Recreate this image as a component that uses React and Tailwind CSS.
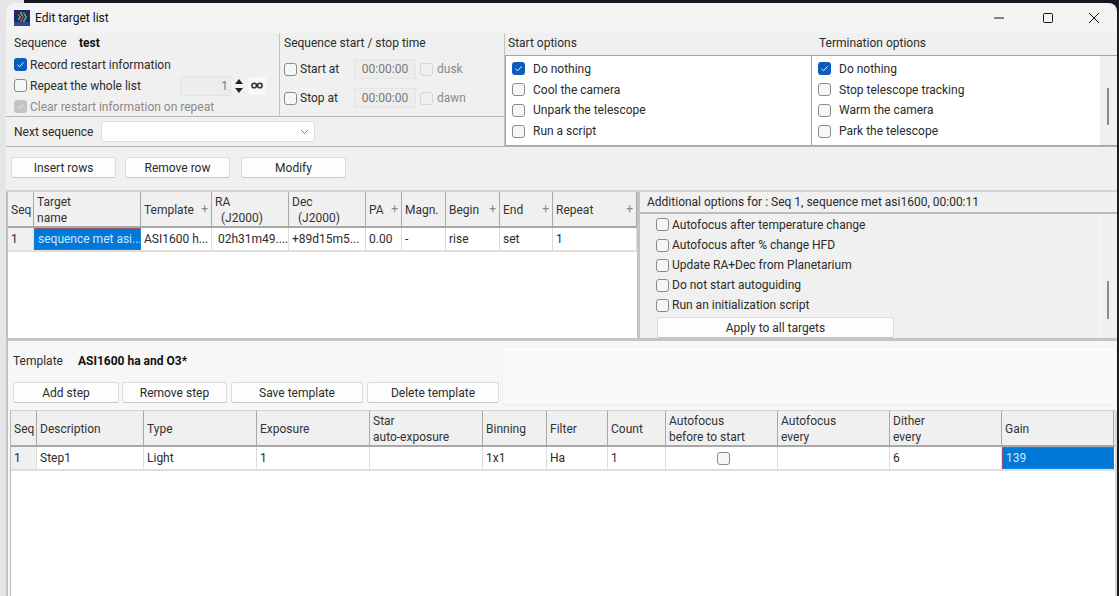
import React from 'react'

function Check({ checked, disabled, className = '' }) {
  if (checked) {
    return (
      <span className={`flex h-[13px] w-[13px] shrink-0 items-center justify-center rounded-[3px] ${disabled ? 'bg-[#c4c4c4]' : 'bg-[#0a5dbb]'} ${className}`}>
        <svg width="9" height="9" viewBox="0 0 9 9" fill="none" stroke="#e8f1fb" strokeWidth="1">
          <path d="M1.5 4.8 3.6 6.8 7.5 2.4" />
        </svg>
      </span>
    )
  }
  return (
    <span className={`block h-[13px] w-[13px] shrink-0 rounded-[3px] border ${disabled ? 'border-[#d6d6d6] bg-[#efefef]' : 'border-[#8b8b8b] bg-[#f6f6f6]'} ${className}`} />
  )
}

function Button({ children, className = '' }) {
  return (
    <div className={`flex h-[21px] items-center justify-center rounded-[3px] border border-[#dcdcdc] border-b-[#c8c8c8] bg-[#fdfdfd] text-[#2b2b2b] ${className}`}>
      {children}
    </div>
  )
}

function CheckRow({ label, checked, gap = 'gap-[8px]', className = '' }) {
  return (
    <div className={`flex shrink-0 items-center ${gap} ${className}`}>
      <Check checked={checked} />
      <span>{label}</span>
    </div>
  )
}

function HeadCell({ children, plus, sub }) {
  return (
    <div className="relative flex flex-col justify-center border-r border-r-[#a8a8a8] pl-[3px] pt-[1px] leading-[16px] text-[#333]">
      <span>{children}</span>
      {sub && <span>{sub}</span>}
      {plus && <span className="absolute right-[3px] top-1/2 -translate-y-1/2 text-[#8a8a8a]">+</span>}
    </div>
  )
}

function Cell({ children, selected, className = '' }) {
  return (
    <div
      className={`flex items-center overflow-hidden whitespace-nowrap pl-[3px] ${
        selected ? 'border border-dotted border-[#a0607f] bg-[#0078d7] text-[#cfe6fb]' : 'border-r border-r-[#dcdcdc] text-[#2b2b2b]'
      } ${className}`}
    >
      {children}
    </div>
  )
}

const targetHead = [
  { t: 'Seq' },
  { t: 'Target', sub: 'name' },
  { t: 'Template', plus: true },
  { t: 'RA', sub: '\u00a0\u00a0(J2000)' },
  { t: 'Dec', sub: '\u00a0\u00a0(J2000)' },
  { t: 'PA', plus: true },
  { t: 'Magn.' },
  { t: 'Begin', plus: true },
  { t: 'End', plus: true },
  { t: 'Repeat', plus: true },
]

const stepHead = [
  { t: 'Seq' },
  { t: 'Description' },
  { t: 'Type' },
  { t: 'Exposure' },
  { t: 'Star', sub: 'auto-exposure' },
  { t: 'Binning' },
  { t: 'Filter' },
  { t: 'Count' },
  { t: 'Autofocus', sub: 'before to start' },
  { t: 'Autofocus', sub: 'every' },
  { t: 'Dither', sub: 'every' },
  { t: 'Gain' },
]

const targetCols = 'grid-cols-[26px_107px_71px_77px_77px_36px_44px_54px_53px_84px]'
const stepCols = 'grid-cols-[26px_107px_113px_113px_113px_64px_61px_58px_112px_112px_112px_112px]'

const iconCells = [
  [6, 2, '#35b060'], [9, 2, '#c8324a'], [4, 4, '#c8324a'], [7, 4, '#35b060'], [10, 4, '#35b060'],
  [5, 6, '#35b060'], [8, 6, '#c8324a'], [11, 6, '#35b060'], [4, 8, '#35b060'], [7, 8, '#c8324a'],
  [10, 8, '#35b060'], [6, 10, '#c8324a'], [9, 10, '#35b060'],
]

export default function App() {
  return (
    <div className="flex h-[596px] w-[1119px] overflow-hidden bg-[#f7f7f7] font-['Roboto',sans-serif] text-[12px] text-[#2b2b2b]">
      <div className="w-[6px] shrink-0 bg-[#e6e6e6]" />
      <div className="flex min-w-0 flex-1 flex-col">
        <div className="flex h-[3px] shrink-0 bg-[#15151f]">
          <div className="w-[18px] bg-[#e6e6e6]" />
        </div>
        <div className="h-[30px] shrink-0 bg-[linear-gradient(90deg,#e6e6e6_50%,#15151f_50%)]">
          <div className="flex h-full items-center rounded-t-lg bg-[#f3f3f3] pl-[8px]">
            <svg width="16" height="16" viewBox="0 0 16 16" className="shrink-0">
              <rect width="16" height="16" fill="#1b2c68" />
              <rect y="12" width="16" height="4" fill="#2c4c8e" />
              {iconCells.map(([x, y, c]) => (
                <rect key={`${x}-${y}`} x={x} y={y} width="2" height="2" fill={c} />
              ))}
            </svg>
            <span className="ml-[5px] text-[#111]">Edit target list</span>
            <div className="ml-auto flex h-full items-center">
              <svg width="12" height="12" viewBox="0 0 12 12" className="mr-[37px]"><path d="M1 6h10" stroke="#111" /></svg>
              <svg width="12" height="12" viewBox="0 0 12 12" className="mr-[34px]"><rect x="1.5" y="1.5" width="9" height="9" rx="1" fill="none" stroke="#111" /></svg>
              <svg width="12" height="12" viewBox="0 0 12 12" className="mr-[17px]"><path d="M1 1l10 10M11 1 1 11" stroke="#111" /></svg>
            </div>
          </div>
        </div>

        {/* top options */}
        <div className="flex h-[114px] shrink-0 border-b border-b-[#b4b4b4] bg-[#f0f0f0]">
          <div className="flex w-[499px] shrink-0 flex-col border-r border-r-[#c4c4c4]">
            <div className="flex h-[84px] shrink-0 border-b border-b-[#b8b8b8]">
              <div className="flex w-[274px] shrink-0 flex-col border-r border-r-[#c4c4c4] pl-[8px]">
                <div className="flex h-[19px] shrink-0 items-center">
                  <span className="w-[65px]">Sequence</span>
                  <span className="font-bold text-[#111]">test</span>
                </div>
                <CheckRow label="Record restart information" checked gap="gap-[3px]" className="mt-[2px] h-[21px]" />
                <div className="flex h-[21px] shrink-0 items-center">
                  <CheckRow label="Repeat the whole list" gap="gap-[3px]" className="w-[166px]" />
                  <div className="flex h-[20px] w-[51px] items-center justify-end border border-[#e4e4e4] bg-[#ededed] pr-[2px] text-[#777]">1</div>
                  <svg width="12" height="18" viewBox="0 0 12 18" className="ml-[2px]">
                    <path d="M6 2 10 7H2zM6 16 2 11h8z" fill="#222" />
                  </svg>
                  <div className="ml-[3px] flex h-[18px] w-[18px] items-center justify-center rounded-[2px] bg-[#f8f8f8]">
                    <svg width="12" height="7" viewBox="0 0 12 7" fill="none" stroke="#333" strokeWidth="1.6">
                      <circle cx="3.2" cy="3.5" r="2.3" />
                      <circle cx="8.8" cy="3.5" r="2.3" />
                    </svg>
                  </div>
                </div>
                <div className="flex h-[21px] shrink-0 items-center gap-[3px] text-[#8a8a8a]">
                  <Check checked disabled />
                  <span>Clear restart information on repeat</span>
                </div>
              </div>
              <div className="flex min-w-0 flex-1 flex-col pl-[4px]">
                <div className="flex h-[19px] items-center">Sequence start / stop time</div>
                <div className="mt-[7px] flex h-[20px] items-center">
                  <CheckRow label="Start at" gap="gap-[3px]" className="w-[70px]" />
                  <div className="flex h-[20px] w-[62px] items-center justify-center border border-[#e4e4e4] bg-[#ededed] text-[#777]">00:00:00</div>
                  <Check disabled className="ml-[4px]" />
                  <span className="ml-[4px] text-[#8a8a8a]">dusk</span>
                </div>
                <div className="mt-[9px] flex h-[20px] items-center">
                  <CheckRow label="Stop at" gap="gap-[3px]" className="w-[70px]" />
                  <div className="flex h-[20px] w-[62px] items-center justify-center border border-[#e4e4e4] bg-[#ededed] text-[#777]">00:00:00</div>
                  <Check disabled className="ml-[4px]" />
                  <span className="ml-[4px] text-[#8a8a8a]">dawn</span>
                </div>
              </div>
            </div>
            <div className="flex min-h-0 flex-1 items-center pl-[8px]">
              <span className="w-[87px]">Next sequence</span>
              <div className="flex h-[21px] w-[214px] items-center justify-end rounded-[3px] border border-[#dcdcdc] bg-white pr-[5px]">
                <svg width="9" height="6" viewBox="0 0 9 6" fill="none" stroke="#777"><path d="M1 1l3.5 3.5L8 1" /></svg>
              </div>
            </div>
          </div>
          <div className="flex w-[306px] shrink-0 flex-col">
            <div className="mb-[2px] flex h-[20px] items-center pl-[3px]">Start options</div>
            <div className="flex min-h-0 flex-1 flex-col justify-center border border-[#a4a4a4] border-r-0 bg-white pb-[1px] pl-[6px]">
              {[['Do nothing', true], ['Cool the camera'], ['Unpark the telescope'], ['Run a script']].map(([t, c]) => (
                <CheckRow key={t} label={t} checked={c} className="h-[20.7px]" />
              ))}
            </div>
          </div>
          <div className="flex min-w-0 flex-1 flex-col">
            <div className="mb-[2px] flex h-[20px] items-center pl-[8px]">Termination options</div>
            <div className="flex min-h-0 flex-1 border border-[#a4a4a4] border-r-0 bg-white">
              <div className="flex flex-1 flex-col justify-center pb-[1px] pl-[6px]">
                {[['Do nothing', true], ['Stop telescope tracking'], ['Warm the camera'], ['Park the telescope']].map(([t, c]) => (
                  <CheckRow key={t} label={t} checked={c} className="h-[20.7px]" />
                ))}
              </div>
              <div className="w-[17px] bg-[#f0f0f0] pl-[7px] pt-[32px]">
                <div className="h-[37px] w-[2px] bg-[#8a8a8a]" />
              </div>
            </div>
          </div>
        </div>

        {/* target buttons */}
        <div className="flex h-[45px] shrink-0 items-start gap-[9px] border-b-2 border-b-[#d2d2d2] bg-[#f0f0f0] pl-[5px] pt-[10px]">
          <Button className="w-[105px]">Insert rows</Button>
          <Button className="w-[105px]">Remove row</Button>
          <Button className="ml-[2px] w-[105px]">Modify</Button>
        </div>

        {/* targets + additional options */}
        <div className="flex h-[149px] shrink-0 border-b-[3px] border-b-[#c4c4c4]">
          <div className="flex w-[631px] shrink-0 flex-col border-l-2 border-l-[#bdbdbd] bg-white">
            <div className={`grid h-[36px] shrink-0 border-b-2 border-b-[#a8a8a8] bg-[#f0f0f0] ${targetCols}`}>
              {targetHead.map((h, i) => (
                <HeadCell key={i} plus={h.plus} sub={h.sub}>{h.t}</HeadCell>
              ))}
            </div>
            <div className={`grid h-[24px] shrink-0 border-b-2 border-b-[#dedede] ${targetCols}`}>
              <Cell className="bg-[#f0f0f0]">1</Cell>
              <Cell selected>sequence met asi...</Cell>
              <Cell>ASI1600 h...</Cell>
              <Cell className="pl-[6px]">02h31m49....</Cell>
              <Cell>+89d15m5...</Cell>
              <Cell>0.00</Cell>
              <Cell>-</Cell>
              <Cell>rise</Cell>
              <Cell>set</Cell>
              <Cell>1</Cell>
            </div>
          </div>
          <div className="w-[3px] shrink-0 bg-[#c4c4c4]" />
          <div className="flex min-w-0 flex-1 flex-col bg-[#f0f0f0]">
            <div className="flex h-[22px] shrink-0 items-center border-b-2 border-b-[#bcbcbc] pl-[7px]">
              Additional options for : Seq 1, sequence met asi1600, 00:00:11
            </div>
            <div className="flex min-h-0 flex-1">
              <div className="flex flex-1 flex-col border-r border-r-[#f8f8f8] pl-[16px]">
                <CheckRow label="Autofocus after temperature change" gap="gap-[3px]" className="h-[21px]" />
                <CheckRow label="Autofocus after % change HFD" gap="gap-[3px]" className="h-[20px]" />
                <CheckRow label="Update RA+Dec from Planetarium" gap="gap-[3px]" className="h-[20px]" />
                <CheckRow label="Do not start autoguiding" gap="gap-[3px]" className="h-[20px]" />
                <CheckRow label="Run an initialization script" gap="gap-[3px]" className="h-[20px]" />
                <Button className="ml-[1px] mt-[2px] w-[237px]">Apply to all targets</Button>
              </div>
              <div className="w-[17px] shrink-0 pl-[7px] pt-[67px]">
                <div className="h-[38px] w-[2px] bg-[#8a8a8a]" />
              </div>
            </div>
          </div>
        </div>

        {/* template */}
        <div className="flex h-[69px] shrink-0 border-l-2 border-l-[#c4c4c4] pt-[3px]">
          <div className="w-[493px] shrink-0 pl-[5px] pt-[8px]">
            <div className="flex h-[18px] items-center">
              <span className="w-[65px]">Template</span>
              <span className="font-bold text-[#111]">ASI1600 ha and O3*</span>
            </div>
            <div className="mt-[12px] flex">
              <Button className="w-[106px]">Add step</Button>
              <Button className="ml-[3px] w-[105px]">Remove step</Button>
              <Button className="ml-[4px] w-[132px]">Save template</Button>
              <Button className="ml-[4px] w-[132px]">Delete template</Button>
            </div>
          </div>
          <div className="mb-[5px] ml-[1px] mt-[2px] flex-1 border border-[#f0f0f0] bg-[#fafafa]" />
        </div>

        {/* steps */}
        <div className="flex min-h-0 flex-1 border-l-2 border-l-[#c4c4c4] bg-[#f7f7f7] pl-[2px]">
          <div className="flex w-[1105px] shrink-0 flex-col border-l border-l-[#b8b8b8] bg-white">
            <div className={`grid h-[37px] shrink-0 border-b-2 border-t border-b-[#a8a8a8] border-t-[#d0d0d0] bg-[#f0f0f0] ${stepCols}`}>
              {stepHead.map((h, i) => (
                <HeadCell key={i} sub={h.sub}>{h.t}</HeadCell>
              ))}
            </div>
            <div className={`grid h-[24px] shrink-0 border-b-2 border-b-[#dedede] ${stepCols}`}>
              <Cell className="bg-[#f0f0f0]">1</Cell>
              <Cell>Step1</Cell>
              <Cell>Light</Cell>
              <Cell>1</Cell>
              <Cell />
              <Cell>1x1</Cell>
              <Cell>Ha</Cell>
              <Cell>1</Cell>
              <Cell className="justify-center pl-0"><Check /></Cell>
              <Cell />
              <Cell>6</Cell>
              <Cell selected>139</Cell>
            </div>
          </div>
          <div className="ml-auto w-[3px] shrink-0 bg-[#d8d8d8]" />
        </div>
      </div>
      <div className="w-[2px] shrink-0 bg-[#1c1c1c]" />
    </div>
  )
}
